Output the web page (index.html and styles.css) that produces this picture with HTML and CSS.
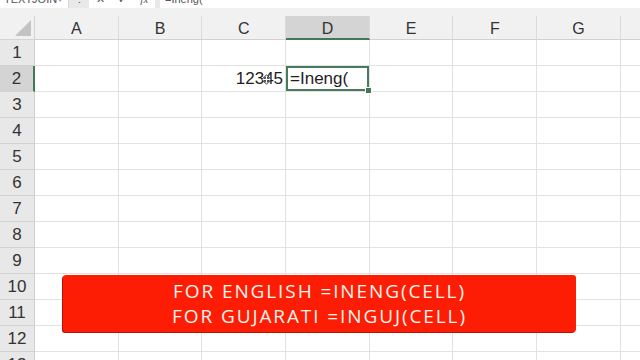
FILE: index.html
```html
<!DOCTYPE html>
<html lang="en">
<head>
<meta charset="utf-8">
<title>Excel INENG</title>
<link rel="stylesheet" href="styles.css">
</head>
<body>
<div class="app">
  <div class="fbar">
    <div class="namebox"><span class="nb-text">TEXTJOIN</span><span class="nb-arrow">&#9662;</span></div>
    <div class="dots">&#8942;</div>
    <div class="fxbox"><span class="fx-i">&#10005;</span><span class="fx-i">&#10003;</span><span class="fx-i fx">fx</span></div>
    <div class="formula">=Ineng(</div>
  </div>
  <div class="gapbar"></div>
  <div class="sheet">
    <div class="corner"><span class="tri"></span></div>
    <div class="ch">A</div><div class="ch">B</div><div class="ch">C</div><div class="ch ch-sel">D</div><div class="ch">E</div><div class="ch">F</div><div class="ch">G</div><div class="ch">H</div>

    <div class="rh">1</div><div class="c"></div><div class="c"></div><div class="c"></div><div class="c"></div><div class="c"></div><div class="c"></div><div class="c"></div><div class="c"></div>
    <div class="rh rh-sel">2</div><div class="c"></div><div class="c"></div><div class="c num">12345<svg class="cursor" viewBox="0 0 12 12" width="11" height="11"><path d="M6 0.8 L8.4 3.4 H7.1 V4.9 H8.6 V3.6 L11.2 6 L8.6 8.4 V7.1 H7.1 V8.6 H8.4 L6 11.2 L3.6 8.6 H4.9 V7.1 H3.4 V8.4 L0.8 6 L3.4 3.6 V4.9 H4.9 V3.4 H3.6 Z" fill="#fff" stroke="#222" stroke-width="0.9" stroke-linejoin="round"/></svg></div><div class="c sel">=Ineng(<span class="handle"></span></div><div class="c"></div><div class="c"></div><div class="c"></div><div class="c"></div>
    <div class="rh">3</div><div class="c"></div><div class="c"></div><div class="c"></div><div class="c"></div><div class="c"></div><div class="c"></div><div class="c"></div><div class="c"></div>
    <div class="rh">4</div><div class="c"></div><div class="c"></div><div class="c"></div><div class="c"></div><div class="c"></div><div class="c"></div><div class="c"></div><div class="c"></div>
    <div class="rh">5</div><div class="c"></div><div class="c"></div><div class="c"></div><div class="c"></div><div class="c"></div><div class="c"></div><div class="c"></div><div class="c"></div>
    <div class="rh">6</div><div class="c"></div><div class="c"></div><div class="c"></div><div class="c"></div><div class="c"></div><div class="c"></div><div class="c"></div><div class="c"></div>
    <div class="rh">7</div><div class="c"></div><div class="c"></div><div class="c"></div><div class="c"></div><div class="c"></div><div class="c"></div><div class="c"></div><div class="c"></div>
    <div class="rh">8</div><div class="c"></div><div class="c"></div><div class="c"></div><div class="c"></div><div class="c"></div><div class="c"></div><div class="c"></div><div class="c"></div>
    <div class="rh">9</div><div class="c"></div><div class="c"></div><div class="c"></div><div class="c"></div><div class="c"></div><div class="c"></div><div class="c"></div><div class="c"></div>
    <div class="rh">10</div><div class="c"></div><div class="c"></div><div class="c"></div><div class="c"></div><div class="c"></div><div class="c"></div><div class="c"></div><div class="c"></div>
    <div class="rh">11</div><div class="c"></div><div class="c"></div><div class="c"></div><div class="c"></div><div class="c"></div><div class="c"></div><div class="c"></div><div class="c"></div>
    <div class="rh">12</div><div class="c"></div><div class="c"></div><div class="c"></div><div class="c"></div><div class="c"></div><div class="c"></div><div class="c"></div><div class="c"></div>
    <div class="rh">13</div><div class="c"></div><div class="c"></div><div class="c"></div><div class="c"></div><div class="c"></div><div class="c"></div><div class="c"></div><div class="c"></div>

    <div class="banner">
      <div class="banner-line">FOR ENGLISH =INENG(CELL)</div>
      <div class="banner-line">FOR GUJARATI =INGUJ(CELL)</div>
    </div>
  </div>
</div>
</body>
</html>
```
FILE: styles.css
```css
html, body {
  margin: 0;
  padding: 0;
  width: 640px;
  height: 360px;
  overflow: hidden;
  background: #ffffff;
}

.app {
  width: 640px;
  height: 360px;
  overflow: hidden;
  font-family: "Liberation Sans", "Open Sans", sans-serif;
  color: #222;
}

/* formula bar, cropped at the top */
.fbar {
  height: 8px;
  overflow: hidden;
  display: flex;
  align-items: flex-end;
  background: #e9e9e9;
}
.fbar > div {
  height: 18px;
  box-sizing: border-box;
  display: flex;
  align-items: center;
  font-size: 11px;
  color: #555;
}
.namebox {
  width: 69px;
  background: #fff;
  border-right: 1px solid #d6d6d6;
  padding: 0 6px 0 4px;
  justify-content: space-between;
}
.nb-arrow { font-size: 8px; color: #888; }
.dots {
  width: 20px;
  justify-content: center;
  color: #aaa;
}
.fxbox {
  width: 66px;
  background: #fff;
  justify-content: space-around;
  color: #666;
}
.fx { font-style: italic; font-family: "Liberation Serif", serif; }
.formula {
  flex: 1;
  margin-left: 5px;
  background: #fff;
  padding-left: 5px;
  font-size: 11px;
}

.gapbar {
  height: 8px;
  background: #f1f1f1;
}

/* grid */
.sheet {
  position: relative;
  display: grid;
  grid-template-columns: 35px repeat(8, 83.7px);
  grid-template-rows: 24px repeat(13, 26px);
}
.corner {
  position: relative;
  background: #f1f1f1;
  border-right: 1px solid #d4d4d4;
  border-bottom: 1px solid #d4d4d4;
  box-sizing: border-box;
}
.tri {
  position: absolute;
  right: 3px;
  bottom: 3px;
  width: 0;
  height: 0;
  border-left: 16px solid transparent;
  border-bottom: 16px solid #c3c3c3;
}
.ch {
  background: #f1f1f1;
  border-right: 1px solid #dadada;
  border-bottom: 1px solid #d0d0d0;
  box-sizing: border-box;
  display: flex;
  align-items: center;
  justify-content: center;
  font-size: 16px;
  color: #333;
  padding-top: 3px;
}
.ch-sel {
  background: #d4d4d4;
  border-bottom: 2px solid #3f7a55;
  color: #333;
}
.rh {
  background: #e8e8e8;
  border-right: 1px solid #cfcfcf;
  border-bottom: 1px solid #d2d2d2;
  box-sizing: border-box;
  display: flex;
  align-items: center;
  justify-content: center;
  font-size: 17px;
  color: #333;
  padding-top: 1px;
}
.rh-sel {
  background: #d4d4d4;
  border-right: 2px solid #3f7a55;
}
.c {
  border-right: 1px solid #e2e2e2;
  border-bottom: 1px solid #e2e2e2;
  box-sizing: border-box;
  display: flex;
  align-items: center;
  font-size: 17px;
  color: #1e1e1e;
}
.num {
  position: relative;
  justify-content: flex-end;
  padding-right: 2px;
  padding-top: 1px;
}
.cursor {
  position: absolute;
  left: 59px;
  top: 8px;
}
.sel {
  position: relative;
  padding-left: 4px;
  padding-top: 1px;
  box-shadow: inset 0 0 0 2px #4a7a5d;
}
.handle {
  position: absolute;
  right: -3px;
  bottom: -3px;
  width: 5px;
  height: 5px;
  background: #3f7a55;
  border: 1px solid #fff;
}

/* overlay banner */
.banner {
  position: absolute;
  left: 63px;
  top: 259px;
  width: 513px;
  height: 57px;
  box-sizing: border-box;
  background: #fc1d04;
  border-radius: 3px;
  box-shadow: -1px 1px 0 #b31507;
  display: flex;
  flex-direction: column;
  align-items: center;
  justify-content: center;
  color: #fff4ee;
  font-family: "Open Sans", "Liberation Sans", sans-serif;
  font-size: 19px;
  font-weight: 500;
  line-height: 25px;
  letter-spacing: 1.9px;
  padding-top: 1px;
}
```
